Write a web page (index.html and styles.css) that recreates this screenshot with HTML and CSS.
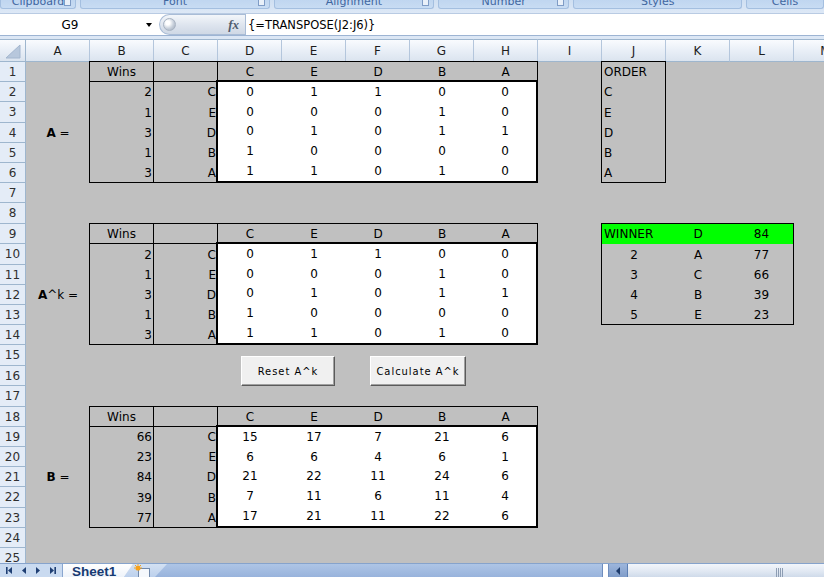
FILE: index.html
```html
<!DOCTYPE html>
<html>
<head>
<meta charset="utf-8">
<link rel="stylesheet" href="styles.css">
</head>
<body>
<div class="app">
  <div class="ribbon">
    <div class="grp g1"><span class="t">Clipboard</span><span class="launch"></span></div>
    <div class="grp g2"><span class="t">Font</span><span class="launch"></span></div>
    <div class="grp g3"><span class="t">Alignment</span><span class="launch"></span></div>
    <div class="grp g4"><span class="t">Number</span><span class="launch"></span></div>
    <div class="grp g5"><span class="t">Styles</span></div>
    <div class="grp g6"><span class="t">Cells</span></div>
  </div>
  <div class="fbar">
    <div class="namebox"><span class="nb-text">G9</span><span class="nb-arrow"></span></div>
    <div class="pill"><span class="knob"></span><span class="fx">fx</span></div>
    <div class="formula">{=TRANSPOSE(J2:J6)}</div>
  </div>
  <div class="band"></div>
  <div class="sheet-wrap">
    <div class="sheet">
      <div class="corner"><svg width="25" height="21" viewBox="0 0 25 21"><polygon points="6,18 20,18 20,5" fill="#b7c7dc" stroke="#a3b6cf" stroke-width="1"/></svg></div>
      <div class="ch">A</div><div class="ch">B</div><div class="ch">C</div><div class="ch">D</div><div class="ch">E</div><div class="ch">F</div><div class="ch">G</div><div class="ch">H</div><div class="ch">I</div><div class="ch">J</div><div class="ch">K</div><div class="ch">L</div><div class="ch">M</div>

      <div class="rh">1</div><div class="rh">2</div><div class="rh">3</div><div class="rh">4</div><div class="rh">5</div>
      <div class="rh">6</div><div class="rh">7</div><div class="rh">8</div><div class="rh">9</div><div class="rh">10</div>
      <div class="rh">11</div><div class="rh">12</div><div class="rh">13</div><div class="rh">14</div><div class="rh">15</div>
      <div class="rh">16</div><div class="rh">17</div><div class="rh">18</div><div class="rh">19</div><div class="rh">20</div>
      <div class="rh">21</div><div class="rh">22</div><div class="rh">23</div><div class="rh">24</div><div class="rh">25</div>

      <div class="lbl lbl-a"><b>A</b>&nbsp;=</div>
      <div class="lbl lbl-ak"><b>A</b>^k =</div>
      <div class="lbl lbl-b"><b>B</b>&nbsp;=</div>

      <div class="tbl tbl-a">
        <div class="hd edge">Wins</div><div class="hd edge"></div>
        <div class="hd">C</div><div class="hd">E</div><div class="hd">D</div><div class="hd">B</div><div class="hd">A</div>
        <div class="w">2</div><div class="n">C</div>
        <div class="w">1</div><div class="n">E</div>
        <div class="w">3</div><div class="n">D</div>
        <div class="w">1</div><div class="n">B</div>
        <div class="w">3</div><div class="n">A</div>
        <div class="mat">
          <div>0</div><div>1</div><div>1</div><div>0</div><div>0</div>
          <div>0</div><div>0</div><div>0</div><div>1</div><div>0</div>
          <div>0</div><div>1</div><div>0</div><div>1</div><div>1</div>
          <div>1</div><div>0</div><div>0</div><div>0</div><div>0</div>
          <div>1</div><div>1</div><div>0</div><div>1</div><div>0</div>
        </div>
      </div>

      <div class="order">
        <div>ORDER</div><div>C</div><div>E</div><div>D</div><div>B</div><div>A</div>
      </div>

      <div class="tbl tbl-ak">
        <div class="hd edge">Wins</div><div class="hd edge"></div>
        <div class="hd">C</div><div class="hd">E</div><div class="hd">D</div><div class="hd">B</div><div class="hd">A</div>
        <div class="w">2</div><div class="n">C</div>
        <div class="w">1</div><div class="n">E</div>
        <div class="w">3</div><div class="n">D</div>
        <div class="w">1</div><div class="n">B</div>
        <div class="w">3</div><div class="n">A</div>
        <div class="mat">
          <div>0</div><div>1</div><div>1</div><div>0</div><div>0</div>
          <div>0</div><div>0</div><div>0</div><div>1</div><div>0</div>
          <div>0</div><div>1</div><div>0</div><div>1</div><div>1</div>
          <div>1</div><div>0</div><div>0</div><div>0</div><div>0</div>
          <div>1</div><div>1</div><div>0</div><div>1</div><div>0</div>
        </div>
      </div>

      <div class="winner">
        <div class="g left">WINNER</div><div class="g">D</div><div class="g">84</div>
        <div>2</div><div>A</div><div>77</div>
        <div>3</div><div>C</div><div>66</div>
        <div>4</div><div>B</div><div>39</div>
        <div>5</div><div>E</div><div>23</div>
      </div>

      <div class="tbl tbl-b">
        <div class="hd edge">Wins</div><div class="hd edge"></div>
        <div class="hd">C</div><div class="hd">E</div><div class="hd">D</div><div class="hd">B</div><div class="hd">A</div>
        <div class="w">66</div><div class="n">C</div>
        <div class="w">23</div><div class="n">E</div>
        <div class="w">84</div><div class="n">D</div>
        <div class="w">39</div><div class="n">B</div>
        <div class="w">77</div><div class="n">A</div>
        <div class="mat">
          <div>15</div><div>17</div><div>7</div><div>21</div><div>6</div>
          <div>6</div><div>6</div><div>4</div><div>6</div><div>1</div>
          <div>21</div><div>22</div><div>11</div><div>24</div><div>6</div>
          <div>7</div><div>11</div><div>6</div><div>11</div><div>4</div>
          <div>17</div><div>21</div><div>11</div><div>22</div><div>6</div>
        </div>
      </div>

      <div class="btn btn-reset">Reset A^k</div>
      <div class="btn btn-calc">Calculate A^k</div>
    </div>
  </div>
  <div class="tabbar">
    <div class="nav">
      <svg width="63" height="13" viewBox="0 0 63 13">
        <g fill="#1f3f74">
          <rect x="6" y="3" width="1.6" height="7"/>
          <polygon points="8,6.5 12,3 12,10"/>
          <polygon points="22,6.5 26,3 26,10"/>
          <polygon points="40,6.5 36,3 36,10"/>
          <polygon points="54,6.5 50,3 50,10"/>
          <rect x="54.4" y="3" width="1.6" height="7"/>
        </g>
      </svg>
    </div>
    <div class="tab-sheet">Sheet1</div>
    <div class="tab-ins">
      <svg width="20" height="13" viewBox="0 0 20 13">
        <rect x="5.5" y="4.5" width="11" height="9" fill="#f5f8fc" stroke="#7189ab"/>
        <circle cx="5" cy="4" r="2.6" fill="#f7a21b"/>
        <g stroke="#f7a21b" stroke-width="1">
          <line x1="5" y1="0" x2="5" y2="1"/><line x1="1" y1="4" x2="2" y2="4"/><line x1="8" y1="4" x2="9" y2="4"/><line x1="2" y1="1" x2="3" y2="2"/><line x1="8" y1="1" x2="7" y2="2"/>
        </g>
      </svg>
    </div>
    <div class="strip"></div>
    <div class="hsplit"></div>
    <div class="hbtn"><span class="harrow"></span></div>
    <div class="htrack"><span class="grip"></span></div>
  </div>
</div>
</body>
</html>
```

FILE: styles.css
```css
* { box-sizing: border-box; margin: 0; padding: 0; }
html, body { width: 824px; height: 577px; overflow: hidden; }
body {
  font-family: "DejaVu Sans", sans-serif;
  font-size: 12px;
  color: #000;
  background: #c0c0c0;
}
.app {
  display: flex;
  flex-direction: column;
  width: 824px;
  height: 577px;
  overflow: hidden;
}

/* ribbon remnant */
.ribbon {
  flex: none;
  height: 13px;
  background: linear-gradient(#cfdff2, #dde8f6);
  display: flex;
  gap: 4px;
}
.grp {
  position: relative;
  height: 9px;
  overflow: hidden;
  background: linear-gradient(#c0d6f0, #c8dcf3);
  border: 1px solid #a4bfe0;
  border-top: none;
  border-radius: 0 0 3px 3px;
  text-align: center;
  color: #3f66a0;
  font-size: 11px;
  line-height: 11px;
}
.grp .t { display: block; margin-top: -4px; }
.g1 { width: 78px; }
.g2 { width: 195px; }
.g3 { width: 164px; }
.g4 { width: 135px; }
.g5 { width: 173px; }
.g6 { width: 80px; }
.launch {
  position: absolute;
  right: 4px;
  bottom: 2px;
  width: 7px;
  height: 7px;
  border: 1px solid #7f9cc6;
  background: #e9f0f9;
}

/* formula bar */
.fbar {
  flex: none;
  height: 23px;
  display: flex;
  background: #fff;
  border-top: 1px solid #b9cbe3;
  border-bottom: 1px solid #9db4d3;
}
.namebox {
  width: 155px;
  display: flex;
  align-items: center;
  position: relative;
}
.nb-text {
  width: 140px;
  text-align: center;
  line-height: 21px;
  padding-top: 1px;
}
.nb-arrow {
  width: 0;
  height: 0;
  border-left: 3.5px solid transparent;
  border-right: 3.5px solid transparent;
  border-top: 4px solid #000;
  margin-left: 6px;
}
.pill {
  margin-left: 4px;
  width: 86px;
  height: 21px;
  border: 1px solid #a9bcd6;
  border-right: none;
  border-radius: 11px 0 0 11px;
  background: linear-gradient(#f3f6fa, #dde4ee 55%, #cfd8e5);
  display: flex;
  align-items: center;
  justify-content: space-between;
  padding: 0 6px 0 3px;
}
.knob {
  width: 13px;
  height: 13px;
  border-radius: 50%;
  background: radial-gradient(circle at 35% 35%, #ffffff 0 20%, #c9d1dc 55%, #9aa6b6 100%);
  border: 1px solid #a8b3c2;
}
.fx {
  font-family: "Liberation Serif", serif;
  font-style: italic;
  font-weight: bold;
  font-size: 13px;
  color: #505c6e;
}
.formula {
  flex: 1;
  border-left: 1px solid #a9bcd6;
  padding-left: 2px;
  line-height: 21px;
  padding-top: 1px;
  font-size: 11.5px;
  white-space: nowrap;
}
.band {
  flex: none;
  height: 3px;
  background: #dce7f5;
}

/* sheet */
.sheet-wrap {
  flex: 1;
  overflow: hidden;
  position: relative;
}
.sheet {
  position: relative;
  display: grid;
  grid-template-columns: 26px repeat(13, 64px);
  grid-template-rows: 23px 20px 20px 21px 20px 20px 20px 20px 21px 20px 21px 20px 20px 20px 20px 21px 20px 21px 20px 20px 20px 20px 21px 20px 20px 20px;
  background: #c0c0c0;
}
.corner, .ch {
  background: linear-gradient(#f9fbfe, #e9eff7 50%, #dbe4ef);
  border-top: 1px solid #9eb6ce;
  border-bottom: 1px solid #9eb6ce;
  border-right: 1px solid #b4c6dc;
}
.corner { border-right-color: #9eb6ce; }
.corner svg { display: block; }
.ch {
  text-align: center;
  line-height: 21px;
  padding-top: 1px;
  color: #1d1d1d;
}
.rh {
  grid-column: 1;
  background: #e4ecf7;
  border-right: 1px solid #9eb6ce;
  border-bottom: 1px solid #9eb6ce;
  display: flex;
  align-items: center;
  justify-content: center;
  color: #2f2f2f;
}

.lbl {
  grid-column: 2;
  display: flex;
  align-items: center;
  justify-content: center;
  white-space: nowrap;
}
.lbl b { font-weight: bold; }
.lbl-a { grid-row: 5; }
.lbl-ak { grid-row: 13; }
.lbl-b { grid-row: 22; }

.tbl {
  margin: -1px 0 0 -1px;
  border: 1px solid #000;
  display: grid;
  grid-template-columns: repeat(6, 64px) 63px;
}
.tbl-a { grid-column: 3 / 10; grid-row: 2 / 8; grid-template-rows: 20px 20px 21px 20px 20px 19px; }
.tbl-ak { grid-column: 3 / 10; grid-row: 10 / 16; grid-template-rows: 20px 21px 20px 20px 20px 19px; }
.tbl-b { grid-column: 3 / 10; grid-row: 19 / 25; grid-template-rows: 20px 20px 20px 20px 21px 19px; }

.hd {
  display: flex;
  align-items: center;
  justify-content: center;
}
.hd.edge {
  border-right: 1px solid #000;
  border-bottom: 1px solid #000;
}
.w {
  border-right: 1px solid #000;
  display: flex;
  align-items: center;
  justify-content: flex-end;
  padding-right: 1px;
}
.n {
  display: flex;
  align-items: center;
  justify-content: flex-end;
  padding-right: 2px;
}
.mat {
  grid-column: 3 / 8;
  grid-row: 2 / 7;
  margin: -2px -1px -1px -2px;
  border: 2px solid #000;
  background: #fff;
  display: grid;
  grid-template-columns: 64px 64px 64px 64px 1fr;
  grid-template-rows: repeat(5, 1fr);
}
.mat > div {
  display: flex;
  align-items: center;
  justify-content: center;
}

.order {
  grid-column: 11 / 12;
  grid-row: 2 / 8;
  margin: -1px 0 0 -1px;
  border: 1px solid #000;
  display: grid;
  grid-template-rows: 20px 20px 21px 20px 20px 19px;
  padding-left: 2px;
}
.order > div {
  display: flex;
  align-items: center;
}

.winner {
  grid-column: 11 / 14;
  grid-row: 10 / 15;
  margin: -1px 0 0 -1px;
  border: 1px solid #000;
  display: grid;
  grid-template-columns: 64px 64px 63px;
  grid-template-rows: 20px 21px 20px 20px 19px;
}
.winner > div {
  display: flex;
  align-items: center;
  justify-content: center;
}
.winner > .g { background: #00ff00; }
.winner > .left { justify-content: flex-start; padding-left: 2px; }

.btn {
  position: absolute;
  top: 317px;
  height: 30px;
  background: #f0f0f0;
  border: 1px solid;
  border-color: #ffffff #5a5a5a #5a5a5a #ffffff;
  box-shadow: inset -1px -1px 0 #a0a0a0;
  display: flex;
  align-items: center;
  justify-content: center;
  font-family: "DejaVu Sans Condensed", "DejaVu Sans", sans-serif;
  font-size: 11px;
  letter-spacing: 1px;
  color: #000;
  white-space: nowrap;
}
.btn-reset { left: 241px; width: 94px; }
.btn-calc { left: 370px; width: 96px; }

/* sheet tabs / scrollbar */
.tabbar {
  flex: none;
  height: 14px;
  display: flex;
  border-top: 1px solid #86a3cc;
  background: linear-gradient(#aec5e6, #98b3dc);
  position: relative;
}
.nav {
  width: 63px;
  background: #c9daf0;
  border-right: 1px solid #8aa6cf;
}
.nav svg { display: block; }
.tab-sheet {
  position: relative;
  z-index: 2;
  width: 70px;
  background: linear-gradient(#ffffff, #eef3fa);
  clip-path: polygon(0 0, 100% 0, calc(100% - 9px) 100%, 0 100%);
  font-family: "Liberation Sans", sans-serif;
  font-weight: bold;
  font-size: 13.5px;
  color: #173a72;
  padding-left: 9px;
  line-height: 16px;
  white-space: nowrap;
}
.tab-ins {
  position: relative;
  z-index: 1;
  margin-left: -9px;
  width: 43px;
  background: linear-gradient(#d3e1f3, #bcd0ec);
  clip-path: polygon(9px 0, 100% 0, calc(100% - 12px) 100%, 0 100%);
  padding-left: 9px;
}
.tab-ins svg { display: block; }
.strip { flex: 1; }
.hsplit {
  width: 7px;
  background: #fff;
  border: 1px solid #6f8dbd;
  border-top: none;
  border-bottom: none;
}
.hbtn {
  width: 19px;
  background: linear-gradient(#9db6dc, #7f9cc9);
  display: flex;
  align-items: center;
  justify-content: center;
  border-right: 1px solid #5c7fb3;
}
.harrow {
  width: 0;
  height: 0;
  border-top: 4px solid transparent;
  border-bottom: 4px solid transparent;
  border-right: 4px solid #1d3b6b;
}
.htrack {
  width: 196px;
  position: relative;
  background: linear-gradient(#f3f6fb, #dfe7f2 60%, #cfdaea);
}
.grip {
  position: absolute;
  left: 148px;
  top: 4px;
  width: 8px;
  height: 10px;
  background: repeating-linear-gradient(90deg, #8d9db3 0 1px, transparent 1px 2px);
}
```
